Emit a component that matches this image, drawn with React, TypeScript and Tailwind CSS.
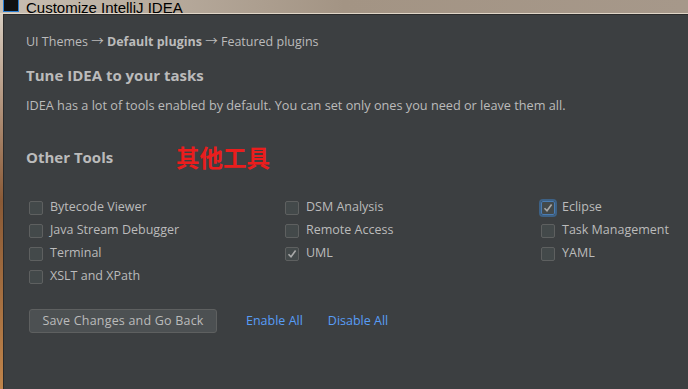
import { type ReactNode } from "react";

const FONT = { fontFamily: '"Open Sans", "Noto Sans", "Noto Sans CJK SC", sans-serif' };

type Plugin = { name: string; on?: boolean; focus?: boolean };

const COLUMNS: Plugin[][] = [
  [{ name: "Bytecode Viewer" }, { name: "Java Stream Debugger" }, { name: "Terminal" }, { name: "XSLT and XPath" }],
  [{ name: "DSM Analysis" }, { name: "Remote Access" }, { name: "UML", on: true }],
  [{ name: "Eclipse", on: true, focus: true }, { name: "Task Management" }, { name: "YAML" }],
];

function Check({ on, focus }: { on?: boolean; focus?: boolean }) {
  return (
    <div
      className={`flex h-[14px] w-[14px] shrink-0 items-center justify-center rounded-[2px] border bg-[#43494a] ${
        focus ? "border-[#4a7cb3] outline outline-2 outline-[#3d6185]" : "border-[#5e6060]"
      }`}
    >
      {on && (
        <svg width="10" height="10" viewBox="0 0 10 10">
          <path d="M1.5 5.2 L4 7.8 L8.6 1.6" fill="none" stroke="#a9a9a9" strokeWidth="1.6" />
        </svg>
      )}
    </div>
  );
}

function Row({ p }: { p: Plugin }) {
  return (
    <div className="flex h-[23px] items-center gap-[7px]">
      <Check on={p.on} focus={p.focus} />
      <span className="text-[12.5px] text-[#bbbbbb]">{p.name}</span>
    </div>
  );
}

function Link({ children }: { children: ReactNode }) {
  return <span className="text-[12.5px] text-[#589df6]">{children}</span>;
}

export default function App() {
  return (
    <div className="flex h-[389px] w-[688px] flex-col overflow-hidden bg-[#3c3f41]" style={FONT}>
      {/* window title bar over the blurred desktop */}
      <div className="flex h-[13px] shrink-0 items-end gap-[7px] overflow-hidden bg-gradient-to-r from-[#c9bfb3] via-[#a39484] to-[#a6988a] pl-[3px]">
        <div className="mb-[1px] h-[16px] w-[16px] shrink-0 border border-[#2a7fd4] bg-[#111]" />
        <span className="mb-[-4px] text-[15px] leading-[18px] text-black" style={{ fontFamily: '"Liberation Sans", sans-serif' }}>
          Customize IntelliJ IDEA
        </span>
      </div>
      <div className="h-[1px] shrink-0 bg-[#e0d6c8]" />

      <div className="flex min-h-0 flex-1">
        <div className="w-[3px] shrink-0 bg-gradient-to-b from-[#d7cdc1] via-[#8a5a36] to-[#c0844a]" />
        <div className="flex-1 border-l border-t border-[#2b2b2b] bg-[#3c3f41] pl-[22px] pt-[18px]">
          <div className="text-[12.5px] text-[#bbbbbb]">
            UI Themes → <b>Default plugins</b> → Featured plugins
          </div>
          <div className="mt-[12px] text-[15px] font-bold text-[#bbbbbb]">Tune IDEA to your tasks</div>
          <div className="mt-[10px] text-[12.7px] text-[#bbbbbb]">
            IDEA has a lot of tools enabled by default. You can set only ones you need or leave them all.
          </div>

          <div className="mt-[27px] flex items-center">
            <span className="w-[150px] text-[15px] font-bold text-[#bbbbbb]">Other Tools</span>
            <span
              className="text-[23.5px] font-bold leading-[30px] text-[#ea1d1d]"
              style={{ fontFamily: '"Noto Sans CJK SC", sans-serif' }}
            >
              其他工具
            </span>
          </div>

          <div className="mt-[24px] flex pl-[3px]">
            {COLUMNS.map((col, i) => (
              <div key={i} className={i < 2 ? "w-[256px]" : ""}>
                {col.map((p) => (
                  <Row key={p.name} p={p} />
                ))}
              </div>
            ))}
          </div>

          <div className="mt-[21px] flex items-center gap-[29px] pl-[3px]">
            <div className="flex h-[24px] w-[188px] items-center justify-center rounded-[3px] border border-[#5e6060] bg-[#4c5052] text-[12.5px] tracking-[0.2px] text-[#bbbbbb]">
              Save Changes and Go Back
            </div>
            <div className="flex gap-[25px]">
              <Link>Enable All</Link>
              <Link>Disable All</Link>
            </div>
          </div>
        </div>
      </div>
    </div>
  );
}
